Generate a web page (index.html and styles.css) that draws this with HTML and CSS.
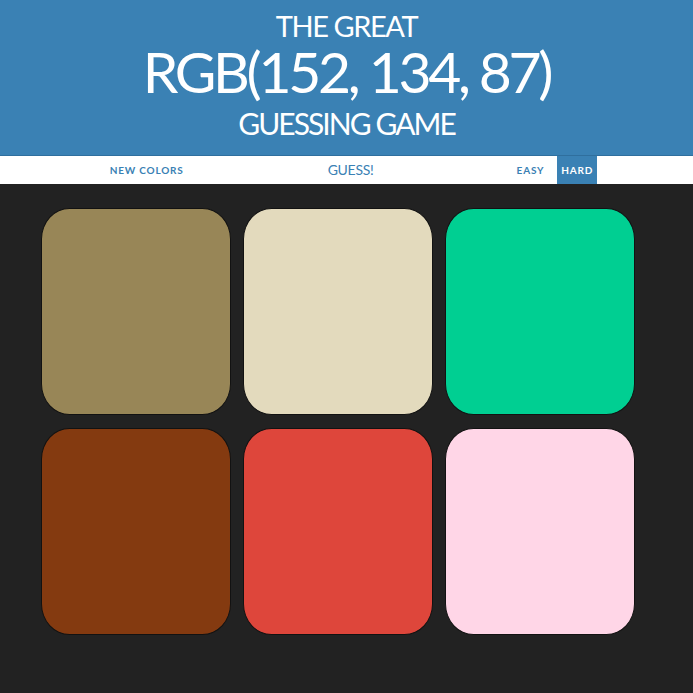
FILE: index.html
```html
<!DOCTYPE html>
<html lang="en">
<head>
<meta charset="utf-8">
<title>Color Game</title>
<link rel="stylesheet" href="styles.css">
</head>
<body>
<h1 class="title">
  <span class="title-small">The Great</span>
  <span class="title-rgb">RGB(152, 134, 87)</span>
  <span class="title-small title-last">Guessing Game</span>
</h1>
<div class="stripe">
  <button class="btn btn-reset">New Colors</button>
  <span class="message">GUESS!</span>
  <button class="btn btn-mode">Easy</button>
  <button class="btn btn-mode selected">Hard</button>
</div>
<div class="board">
  <div class="square sq1"></div>
  <div class="square sq2"></div>
  <div class="square sq3"></div>
  <div class="square sq4"></div>
  <div class="square sq5"></div>
  <div class="square sq6"></div>
</div>
</body>
</html>
```
FILE: styles.css
```css
html, body {
  margin: 0;
  padding: 0;
}
body {
  background: #222222;
  font-family: Lato, "Open Sans", sans-serif;
  height: 693px;
  overflow: hidden;
}
.title {
  margin: 0;
  background: #3a81b4;
  color: #ffffff;
  text-align: center;
  font-weight: 400;
  text-transform: uppercase;
  padding: 9px 0 8px;
  height: 138px;
  letter-spacing: -0.045em;
}
.title-small {
  display: block;
  font-size: 29px;
  line-height: 34px;
}
.title-last {
  font-size: 30px;
  line-height: 47px;
  letter-spacing: -0.065em;
}
.title-rgb {
  display: block;
  font-size: 57px;
  line-height: 57px;
  letter-spacing: -0.058em;
}
.stripe {
  background: #ffffff;
  height: 28px;
  display: flex;
  justify-content: center;
  align-items: stretch;
  border-top: 1px solid #2f6f9e;
  padding-left: 8px;
}
.btn {
  border: none;
  background: none;
  margin: 0;
  padding: 0 5px;
  font-family: Lato, sans-serif;
  font-weight: 700;
  font-size: 10px;
  letter-spacing: 0.8px;
  text-transform: uppercase;
  color: #3a81b4;
  height: 100%;
}
.btn-reset {
  padding: 0 6px;
}
.message {
  width: 322px;
  text-align: center;
  color: #3a81b4;
  font-size: 14px;
  line-height: 28px;
  letter-spacing: -0.02em;
}
.btn-mode + .btn-mode {
  margin-left: 8px;
}
.selected {
  background: #3a81b4;
  color: #ffffff;
  padding: 0 4px;
}
.board {
  display: grid;
  grid-template-columns: repeat(3, 190px);
  grid-auto-rows: 207px;
  column-gap: 12px;
  row-gap: 13px;
  margin: 24px 0 0 41px;
}
.square {
  border: 1px solid #121212;
  border-radius: 15%;
  box-sizing: border-box;
}
.sq1 { background: #988657; }
.sq2 { background: #e3dabd; }
.sq3 { background: #00cf92; }
.sq4 { background: #843a10; }
.sq5 { background: #de463b; }
.sq6 { background: #ffd6e7; }
```
